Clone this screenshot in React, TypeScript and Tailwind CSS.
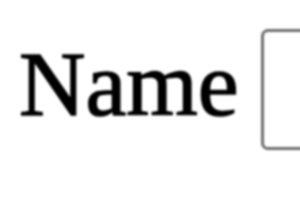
export default function App() {
  return (
    <div className="h-[210px] w-[300px] overflow-hidden bg-white">
      <div className="flex items-start pl-[19px] font-['Liberation_Serif',_'Times_New_Roman',_serif] text-black blur-[0.8px]">
        <span className="mt-[38px] shrink-0 text-[92px] leading-none [-webkit-text-stroke:1.4px_#000]">Name</span>
        <div className="ml-[22px] mt-[29px] h-[121px] w-[200px] shrink-0 rounded-[7px] border-[3px] border-[#6e6e6e]" />
      </div>
    </div>
  )
}
